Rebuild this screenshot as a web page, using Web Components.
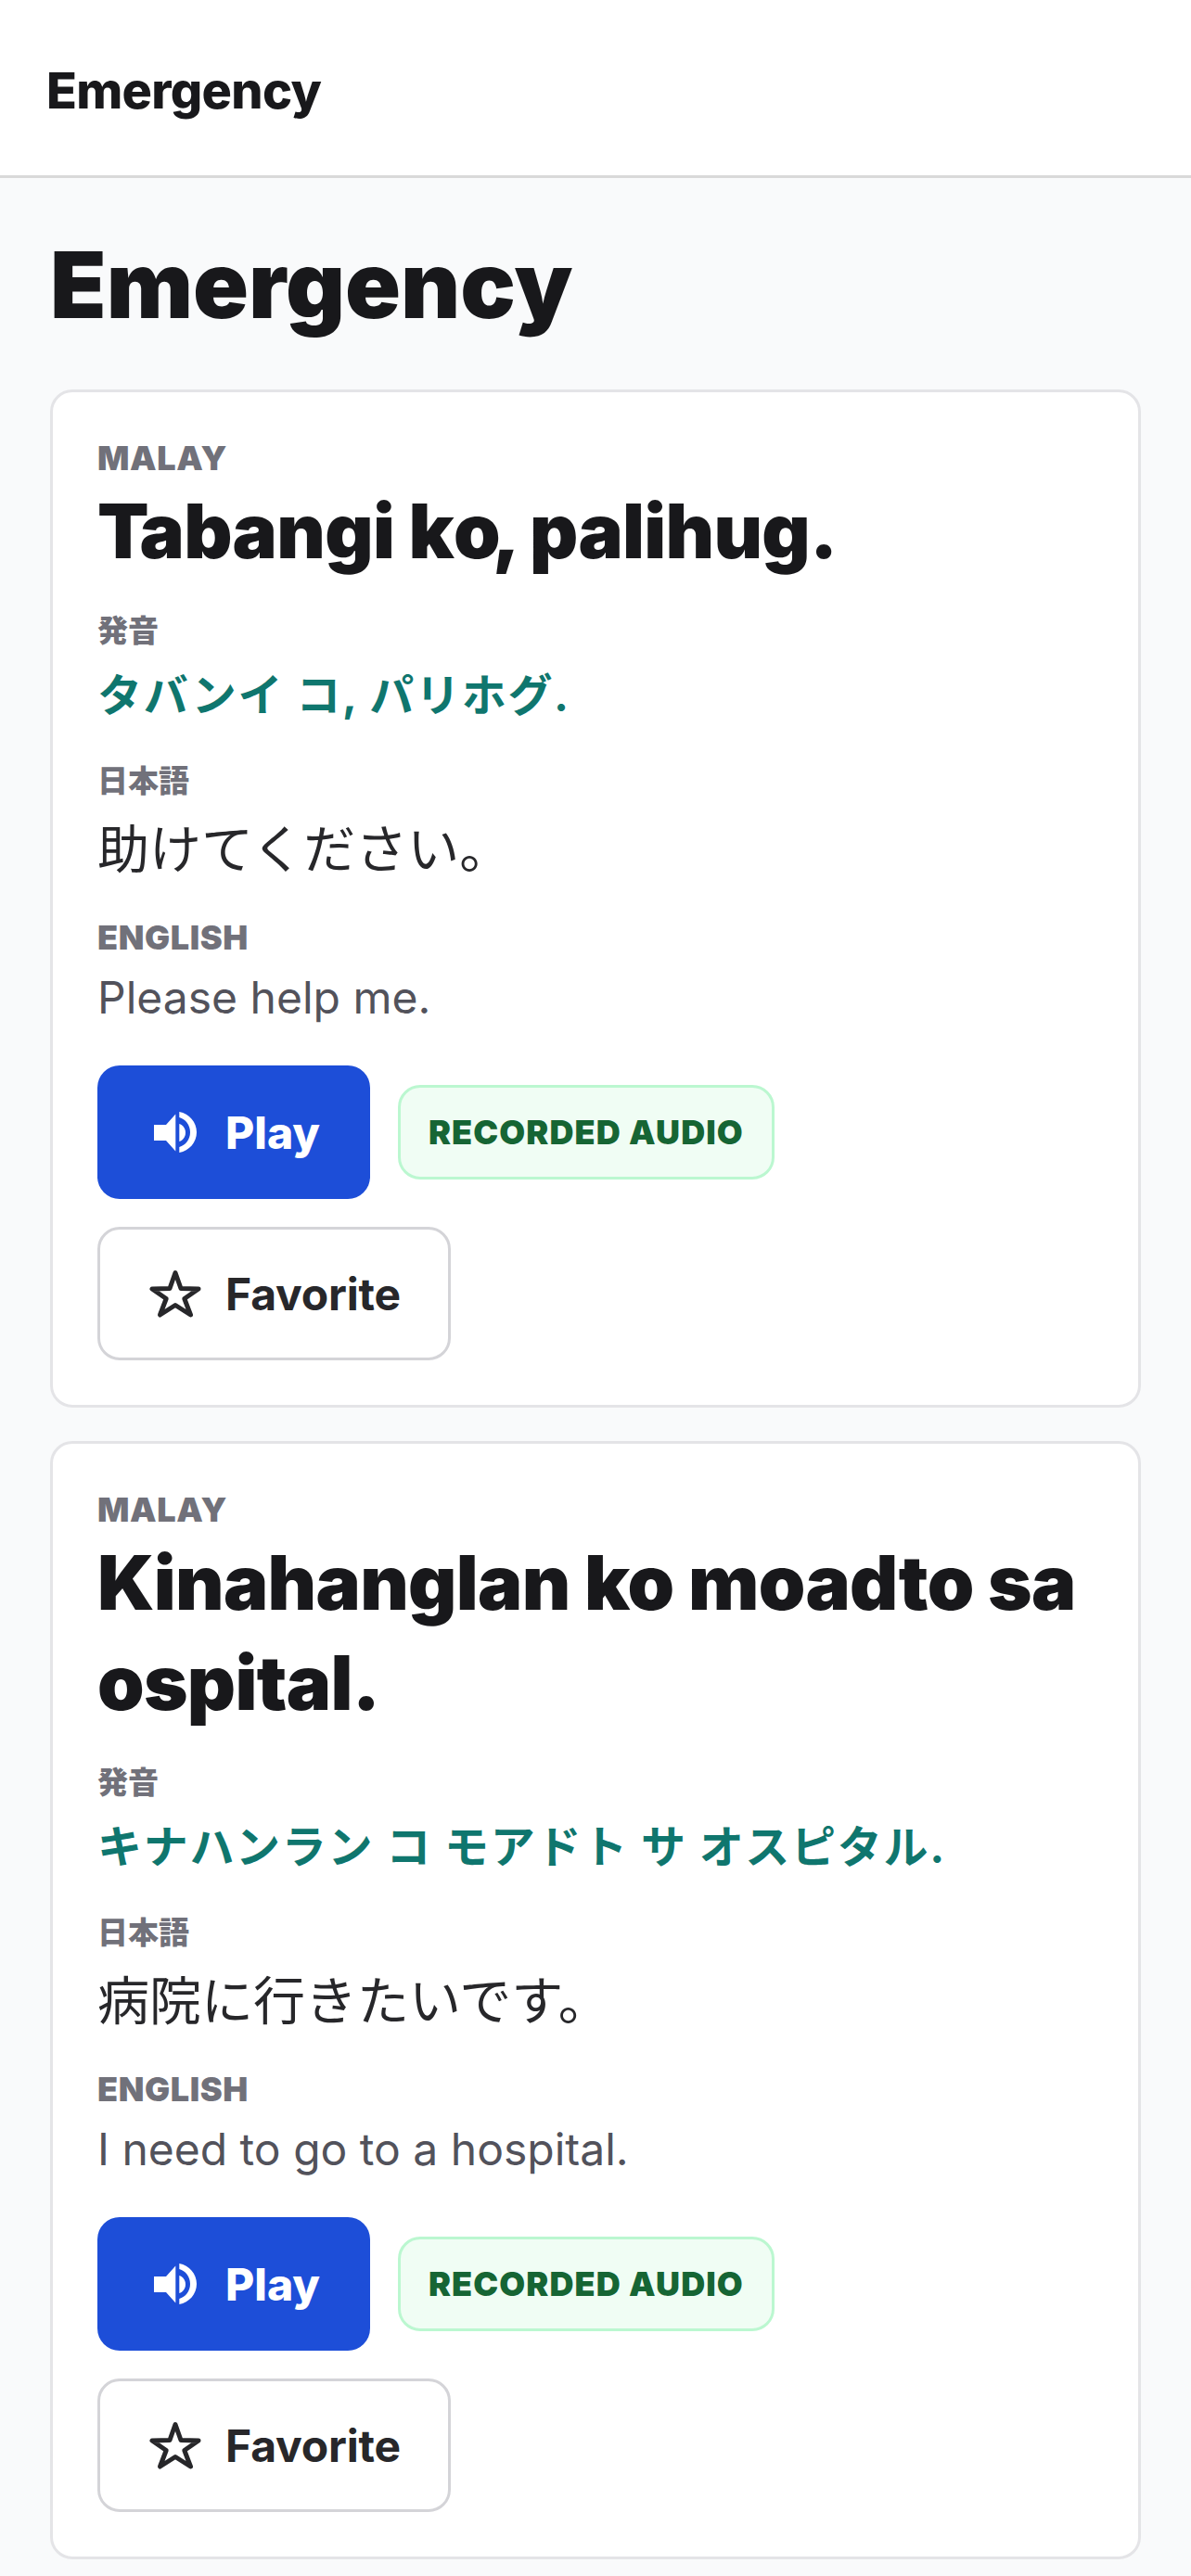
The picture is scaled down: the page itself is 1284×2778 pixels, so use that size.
<!DOCTYPE html>
<html lang="ja">
<head>
<meta charset="utf-8">
<title>Emergency</title>
<style>
  html, body { margin: 0; padding: 0; }
  body {
    background: #f9fafb;
    color: #18181b;
    font-family: Inter, "Noto Sans CJK JP", sans-serif;
  }
</style>
</head>
<body>
<app-nav>Emergency</app-nav>
<phrase-list heading="Emergency">
  <phrase-card phrase="Tabangi ko, palihug." reading="タバンイ コ, パリホグ." japanese="助けてください。" english="Please help me."></phrase-card>
  <phrase-card phrase="Kinahanglan ko moadto sa ospital." reading="キナハンラン コ モアドト サ オスピタル." japanese="病院に行きたいです。" english="I need to go to a hospital."></phrase-card>
</phrase-list>

<script>
const ICONS = {
  speaker: /*html*/ `<svg viewBox="-7 -8 60 60" width="60" height="60" fill="#fff">
      <path d="M0 14h13L23.300 2.600v40L13 31H0z"/>
      <path d="M27.300 0C38 2 46 11 46 22S38 42 27.300 44v-6C34 36 39 30 39 22S34 8 27.300 6z"/>
      <path d="M27.300 13C31 14 34 18 34 22.500S31 31 27.300 32z"/>
    </svg>`,
  star: /*html*/ `<svg viewBox="-3 -5 60 60" width="60" height="60" fill="none" stroke="#27272a" stroke-width="5" stroke-linejoin="round">
      <path d="M27 2.500L33 19.500 52 20 36.800 30.500 43.500 48 27 37.500 10.500 48 17.200 30.500 2 20 21 19.500z"/>
    </svg>`,
};

customElements.define(
  'app-nav',
  class AppNav extends HTMLElement {
    constructor() {
      super();
      this.attachShadow({ mode: 'open' });
    }

    connectedCallback() {
      this.shadowRoot.innerHTML = /*html*/ `
        <style>
          :host {
            display: flex;
            align-items: center;
            box-sizing: border-box;
            height: 192px;
            padding: 6px 50px 0;
            background: #fff;
            border-bottom: 3px solid #d9d9d9;
            font-size: 54px;
            font-weight: 800;
            color: #18181b;
            letter-spacing: -0.7px;
          }
        </style>
        <slot></slot>
      `;
    }
  }
);

customElements.define(
  'phrase-list',
  class PhraseList extends HTMLElement {
    constructor() {
      super();
      this.attachShadow({ mode: 'open' });
    }

    connectedCallback() {
      this.shadowRoot.innerHTML = /*html*/ `
        <style>
          :host {
            display: block;
            padding: 52px 54px 0;
          }
          h1 {
            margin: 0 0 50px;
            font-size: 99px;
            line-height: 126px;
            font-weight: 900;
            letter-spacing: 0;
            color: #18181b;
          }
          .cards {
            display: flex;
            flex-direction: column;
            gap: 36px;
          }
        </style>
        <h1>${this.getAttribute('heading')}</h1>
        <div class="cards"><slot></slot></div>
      `;
    }
  }
);

customElements.define(
  'phrase-label',
  class PhraseLabel extends HTMLElement {
    constructor() {
      super();
      this.attachShadow({ mode: 'open' });
    }

    connectedCallback() {
      this.shadowRoot.innerHTML = /*html*/ `
        <style>
          :host {
            display: block;
            font-size: 36px;
            line-height: 42px;
            font-weight: 900;
            color: #71717a;
            letter-spacing: 0.6px;
            margin-bottom: 11px;
          }
          :host([cjk]) {
            font-size: 33px;
            letter-spacing: 0;
            margin-bottom: 16px;
          }
          :host([tight]) {
            margin-bottom: 4px;
          }
        </style>
        <slot></slot>
      `;
    }
  }
);

customElements.define(
  'phrase-card',
  class PhraseCard extends HTMLElement {
    constructor() {
      super();
      this.attachShadow({ mode: 'open' });
    }

    // the reference font sets "Ta" and "o," closer than ours does
    get phraseHtml() {
      return this.getAttribute('phrase')
        .replace('Ta', '<span class="kern-t">T</span>a')
        .replace('o,', '<span class="kern-o">o</span>,');
    }

    connectedCallback() {
      this.shadowRoot.innerHTML = /*html*/ `
        <style>
          :host {
            display: block;
            box-sizing: border-box;
            background: #fff;
            border: 3px solid #e4e4e7;
            border-radius: 24px;
            padding: 50px 48px 48px;
          }
          .phrase {
            font-size: 81px;
            line-height: 108px;
            font-weight: 900;
            letter-spacing: -0.7px;
            color: #18181b;
            margin-bottom: 32px;
          }
          .kern-t { letter-spacing: -10px; }
          .kern-o { letter-spacing: -9px; }
          .reading {
            font-size: 48px;
            line-height: 66px;
            font-weight: 700;
            letter-spacing: 1.7px;
            color: #0f766e;
            margin-bottom: 38px;
          }
          .japanese {
            font-size: 56px;
            line-height: 74px;
            color: #27272a;
            margin-bottom: 37px;
          }
          .english {
            font-size: 48px;
            line-height: 66px;
            color: #52525b;
            margin-bottom: 40px;
          }
          .actions {
            display: flex;
            flex-direction: column;
            align-items: flex-start;
            gap: 30px;
          }
          .row {
            display: flex;
            align-items: center;
            gap: 30px;
          }
          button {
            display: inline-flex;
            align-items: center;
            gap: 24px;
            box-sizing: border-box;
            height: 144px;
            padding: 0 54px;
            border-radius: 24px;
            font: 700 48px Inter, sans-serif;
            cursor: pointer;
          }
          .play {
            background: #1d4ed8;
            border: 0;
            color: #fff;
            font-weight: 800;
          }
          .favorite {
            background: #fff;
            border: 3px solid #d4d4d8;
            color: #27272a;
            padding: 0 51px;
            letter-spacing: -0.2px;
          }
          .badge {
            box-sizing: border-box;
            height: 102px;
            display: inline-flex;
            align-items: center;
            padding: 0 30px;
            background: #f0fdf4;
            border: 3px solid #bbf7d0;
            border-radius: 24px;
            color: #166534;
            font-size: 36px;
            font-weight: 900;
            letter-spacing: 1.1px;
          }
        </style>
        <phrase-label tight>MALAY</phrase-label>
        <div class="phrase">${this.phraseHtml}</div>
        <phrase-label cjk>発音</phrase-label>
        <div class="reading">${this.getAttribute('reading')}</div>
        <phrase-label cjk>日本語</phrase-label>
        <div class="japanese">${this.getAttribute('japanese')}</div>
        <phrase-label>ENGLISH</phrase-label>
        <div class="english">${this.getAttribute('english')}</div>
        <div class="actions">
          <div class="row">
            <button class="play">${ICONS.speaker}<span>Play</span></button>
            <span class="badge">RECORDED AUDIO</span>
          </div>
          <button class="favorite">${ICONS.star}<span>Favorite</span></button>
        </div>
      `;
    }
  }
);
</script>
</body>
</html>
